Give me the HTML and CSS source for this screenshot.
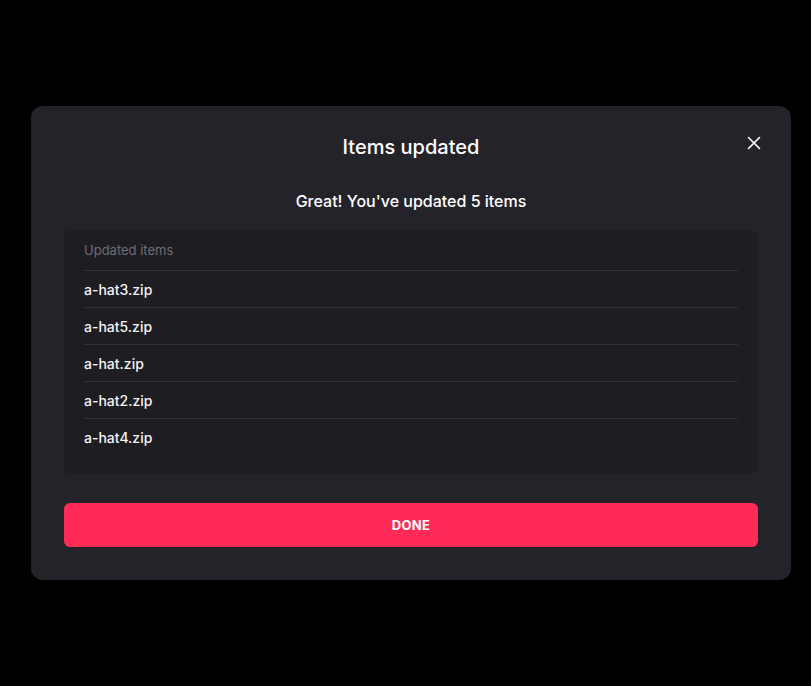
FILE: index.html
```html
<!DOCTYPE html>
<html>
<head>
<meta charset="utf-8">
<link rel="stylesheet" href="styles.css">
</head>
<body>
<div class="modal">
  <button class="close" aria-label="Close">
    <svg width="14" height="14" viewBox="0 0 14 14"><path d="M1.5 1.5 L12.5 12.5 M12.5 1.5 L1.5 12.5" stroke="#fff" stroke-width="1.6" stroke-linecap="round" fill="none"/></svg>
  </button>
  <h1 class="title">Items updated</h1>
  <p class="subtitle">Great! You've updated 5 items</p>
  <div class="list">
    <div class="list-label">Updated items</div>
    <div class="row">a-hat3.zip</div>
    <div class="row">a-hat5.zip</div>
    <div class="row">a-hat.zip</div>
    <div class="row">a-hat2.zip</div>
    <div class="row">a-hat4.zip</div>
  </div>
  <button class="done">DONE</button>
</div>
</body>
</html>
```
FILE: styles.css
```css
* { box-sizing: border-box; }
html, body { margin: 0; padding: 0; background: #000; }
body {
  font-family: Inter, "Noto Sans", sans-serif;
  color: #fff;
  width: 811px;
  height: 686px;
  overflow: hidden;
}
.modal {
  position: relative;
  margin: 106px 0 0 31px;
  width: 760px;
  height: 474px;
  background: #25232a;
  border-radius: 12px;
  padding: 0 33px 33px;
  display: flex;
  flex-direction: column;
}
.close {
  position: absolute;
  top: 30px;
  right: 30px;
  width: 14px;
  height: 14px;
  padding: 0;
  border: 0;
  background: none;
  display: flex;
}
.title {
  margin: 27px 0 0;
  font-size: 20px;
  line-height: 28px;
  font-weight: 500;
  text-align: center;
}
.subtitle {
  margin: 28px 0 0;
  font-size: 16px;
  line-height: 24px;
  font-weight: 500;
  text-align: center;
}
.list {
  margin-top: 17px;
  background: #1e1d22;
  border-radius: 8px;
  padding: 0 20px 19px;
}
.list-label {
  height: 40px;
  display: flex;
  align-items: center;
  font-size: 13px;
  color: #6f6d76;
}
.row {
  height: 37px;
  border-top: 1px solid #323137;
  display: flex;
  align-items: center;
  font-size: 14px;
  font-weight: 500;
  color: #f4f4f5;
}
.done {
  margin-top: 29px;
  height: 44px;
  border: 0;
  border-radius: 6px;
  background: #ff2a55;
  color: #fff;
  font-family: Inter, "Noto Sans", sans-serif;
  font-size: 13px;
  font-weight: 700;
  letter-spacing: 0.3px;
}
```
